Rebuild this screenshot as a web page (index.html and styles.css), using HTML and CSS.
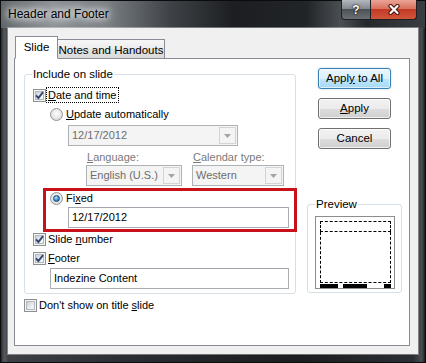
FILE: index.html
```html
<!DOCTYPE html>
<html lang="en">
<head>
    <meta charset="UTF-8">
    <title>Header and Footer</title>
    <link rel="stylesheet" href="styles.css">
</head>
<body>
    <div class="window">
        <div class="titlebar">
            <span class="title">Header and Footer</span>
            <div class="caption-btns">
                <span class="cap-btn help">?</span>
                <span class="cap-btn close">
                    <svg width="14" height="11" viewBox="0 0 14 11">
                        <path d="M3.5 2 L10.5 9 M10.5 2 L3.5 9" stroke="#4a120c" stroke-width="4.2" stroke-linecap="round"/>
                        <path d="M3.5 2 L10.5 9 M10.5 2 L3.5 9" stroke="#fff" stroke-width="2.2" stroke-linecap="round"/>
                    </svg>
                </span>
            </div>
        </div>

        <div class="client">
            <div class="tabs">
                <div class="tab active">Slide</div>
                <div class="tab">Notes and Handouts</div>
            </div>

            <div class="tab-page">
                <div class="left-col">
                    <fieldset class="group include">
                        <legend>Include on slide</legend>

                        <div class="row date-row">
                            <span class="check"><span class="check-inner"><svg class="tick" width="9" height="9" viewBox="0 0 9 9"><path d="M1 4.3 L3.4 7 L8 1.2" fill="none" stroke="#2f4470" stroke-width="1.9"/></svg></span></span>
                            <span class="focus"><u>D</u>ate and time</span>
                        </div>

                        <div class="row radio-row auto-row">
                            <span class="radio"></span>
                            <span><u>U</u>pdate automatically</span>
                        </div>

                        <div class="combo date-combo">
                            <span class="combo-text">12/17/2012</span>
                            <span class="combo-btn"><svg width="7" height="4" viewBox="0 0 7 4"><polygon points="0,0 7,0 3.5,4" fill="#a4a4a4"/></svg></span>
                        </div>

                        <div class="lang-labels">
                            <span class="dim lang-label"><u>L</u>anguage:</span>
                            <span class="dim"><u>C</u>alendar type:</span>
                        </div>

                        <div class="lang-combos">
                            <div class="combo lang-combo">
                                <span class="combo-text">English (U.S.)</span>
                                <span class="combo-btn"><svg width="7" height="4" viewBox="0 0 7 4"><polygon points="0,0 7,0 3.5,4" fill="#a4a4a4"/></svg></span>
                            </div>
                            <div class="combo cal-combo">
                                <span class="combo-text">Western</span>
                                <span class="combo-btn"><svg width="7" height="4" viewBox="0 0 7 4"><polygon points="0,0 7,0 3.5,4" fill="#a4a4a4"/></svg></span>
                            </div>
                        </div>

                        <div class="highlight">
                            <div class="row radio-row">
                                <span class="radio on"></span>
                                <span>Fi<u>x</u>ed</span>
                            </div>
                            <div class="textbox fixed-box">12/17/2012</div>
                        </div>

                        <div class="row">
                            <span class="check"><span class="check-inner"><svg class="tick" width="9" height="9" viewBox="0 0 9 9"><path d="M1 4.3 L3.4 7 L8 1.2" fill="none" stroke="#2f4470" stroke-width="1.9"/></svg></span></span>
                            <span>Slide <u>n</u>umber</span>
                        </div>

                        <div class="row footer-row">
                            <span class="check"><span class="check-inner"><svg class="tick" width="9" height="9" viewBox="0 0 9 9"><path d="M1 4.3 L3.4 7 L8 1.2" fill="none" stroke="#2f4470" stroke-width="1.9"/></svg></span></span>
                            <span><u>F</u>ooter</span>
                        </div>

                        <div class="textbox footer-box">Indezine Content</div>
                    </fieldset>

                    <div class="row title-row">
                        <span class="check"><span class="check-inner"></span></span>
                        <span>Don't show on title <u>s</u>lide</span>
                    </div>
                </div>

                <div class="right-col">
                    <div class="btn default">Appl<u>y</u> to All</div>
                    <div class="btn"><u>A</u>pply</div>
                    <div class="btn">Cancel</div>

                    <fieldset class="group preview">
                        <legend>Preview</legend>
                        <div class="preview-page">
                            <div class="ph-header"></div>
                            <div class="ph-body"></div>
                            <div class="ph-footer">
                                <span class="bar bar-date"></span>
                                <span class="bar bar-text"></span>
                                <span class="bar bar-num"></span>
                            </div>
                        </div>
                    </fieldset>
                </div>
            </div>
        </div>
    </div>
</body>
</html>
```

FILE: styles.css
```css
body {
    margin: 0;
    background: #000;
    font-family: "Liberation Sans", Arial, sans-serif;
    font-size: 11px;
    color: #000;
}

/* window frame */
.window {
    width: 426px;
    height: 363px;
    display: flex;
    flex-direction: column;
    background: linear-gradient(to right, #1a1c1f 0%, #55595e 1%, #3d4145 2%, #2a2d31 30%, #1b1d20 70%, #2c2f33 97%, #4a4e52 99%, #0e0f10 100%);
    box-shadow: inset 0 0 0 1px #0b0b0b;
}

.titlebar {
    height: 28px;
    display: flex;
    align-items: flex-start;
    background: linear-gradient(to right, #5f6469 0%, #8d9297 12%, #7a7f84 25%, #3e4246 40%, #1c1e21 55%, #222528 72%, #4b4f53 80%, #25282b 86%, #3a3e42 100%);
    box-shadow: inset 0 1px 0 #0b0b0b, inset 1px 0 0 #0b0b0b, inset -1px 0 0 #0b0b0b;
}

.title {
    padding-left: 8px;
    line-height: 29px;
    font-size: 12px;
    color: #000;
    text-shadow: 0 0 6px #fff, 0 0 10px #fff, 0 0 14px rgba(255, 255, 255, 0.9);
}

.caption-btns {
    margin-left: auto;
    margin-right: 9px;
    display: flex;
}

.cap-btn {
    height: 20px;
    box-sizing: border-box;
    display: flex;
    align-items: center;
    justify-content: center;
    border: 1px solid #1e2023;
    border-top: none;
}

.help {
    width: 30px;
    border-bottom-left-radius: 4px;
    background: linear-gradient(#b3b8be 0%, #858a90 45%, #4d5258 50%, #6b7075 100%);
    color: #fff;
    font-weight: bold;
    font-size: 12px;
    text-shadow: 0 0 2px #000, 0 0 1px #000;
}

.close {
    width: 47px;
    margin-left: -1px;
    border-bottom-right-radius: 4px;
    background: linear-gradient(#eaa497 0%, #d9725f 45%, #c23a26 50%, #d4553a 100%);
}

/* client area */
.client {
    flex: 1;
    margin: 0 8px 9px 8px;
    padding: 8px 8px 8px 6px;
    background: #f0f0f0;
    display: flex;
    flex-direction: column;
    box-shadow: 0 0 0 1px rgba(255, 255, 255, 0.35);
}

.tabs {
    display: flex;
    align-items: flex-end;
    padding-left: 1px;
    margin-bottom: -1px;
    position: relative;
    z-index: 1;
}

.tab {
    height: 20px;
    width: 108px;
    box-sizing: border-box;
    margin-left: -1px;
    border: 1px solid #898c95;
    background: linear-gradient(#f6f6f6, #ececec 50%, #e2e2e2 51%, #dadada);
    font-size: 11.5px;
    display: flex;
    align-items: center;
    justify-content: center;
    padding-top: 1px;
}

.tab.active {
    height: 23px;
    width: 43px;
    margin-left: 0;
    background: #fff;
    border-bottom-color: #fff;
    position: relative;
    z-index: 1;
    padding-top: 0;
    padding-bottom: 2px;
}

.tab-page {
    flex: 1;
    display: flex;
    align-items: flex-start;
    padding: 8px 0 0 9px;
    border: 1px solid #898c95;
    background: #fff;
}

/* group boxes */
.group {
    margin: 0;
    border: 1px solid #d5dfe5;
    border-radius: 3px;
    min-width: 0;
}

.group legend {
    padding: 0 1px;
    line-height: 15px;
    font-size: 11.5px;
}

.left-col {
    width: 272px;
}

.include {
    padding: 0 0 4px 8px;
}

.include legend {
    margin-left: -1px;
}

.row {
    display: flex;
    align-items: center;
    height: 14px;
    line-height: 14px;
}

.date-row {
    margin-top: 6px;
}

.auto-row {
    margin-top: 5px;
}

.footer-row {
    margin-top: 5px;
}

.title-row {
    margin-top: 4px;
}

.radio-row {
    margin-left: 17px;
}

.check {
    width: 13px;
    height: 13px;
    box-sizing: border-box;
    flex: none;
    padding: 1px;
    margin-right: 2px;
    border: 1px solid #8e8f8f;
    background: #f4f4f4;
}

.check-inner {
    display: block;
    width: 9px;
    height: 9px;
    box-sizing: border-box;
    border: 1px solid #b3b8bf;
    background: linear-gradient(135deg, #cdd2d8, #eef0f2 70%, #f8f8f8);
}

.tick {
    display: block;
    margin: -1px;
    overflow: visible;
}

.focus {
    margin-left: -1px;
    padding: 0 1px;
    outline: 1px dotted #000;
}

.radio {
    width: 13px;
    height: 13px;
    box-sizing: border-box;
    flex: none;
    margin-right: 3px;
    padding: 2px;
    border: 1px solid #939393;
    border-radius: 50%;
    background: radial-gradient(circle at 50% 40%, #fdfdfd, #e4e4e4 60%, #cfcfcf);
}

.radio.on::before {
    content: "";
    display: block;
    width: 7px;
    height: 7px;
    box-sizing: border-box;
    border-radius: 50%;
    border: 1px solid #1c4a7e;
    background: radial-gradient(circle at 40% 35%, #b9e6fc, #3b8fd0 55%, #185796);
}

/* disabled combo boxes */
.combo {
    display: flex;
    height: 21px;
    box-sizing: border-box;
    border: 1px solid #adb2b5;
    background: #f4f4f4;
    color: #6d6d6d;
    line-height: 19px;
    padding-left: 3px;
}

.combo-text {
    flex: 1;
}

.combo-btn {
    width: 17px;
    flex: none;
    margin: 1px 1px 1px 0;
    box-sizing: border-box;
    border: 1px solid #d2d4d6;
    display: flex;
    align-items: center;
    justify-content: center;
}

.date-combo {
    width: 170px;
    margin: 4px 0 0 35px;
}

.lang-labels {
    display: flex;
    margin: 4px 0 0 54px;
    height: 14px;
    line-height: 14px;
}

.dim {
    color: #7a7a7a;
}

.lang-label {
    width: 106px;
}

.lang-combos {
    display: flex;
    margin: 1px 0 0 53px;
}

.lang-combo {
    width: 96px;
    margin-right: 10px;
}

.cal-combo {
    width: 92px;
}

/* red annotation box round the Fixed option */
.highlight {
    height: 44px;
    box-sizing: border-box;
    margin: 2px -2px 0 10px;
    padding: 0 0 1px 4px;
    border: 3px solid #c8121b;
}

.highlight .radio-row {
    margin-left: 0;
}

.textbox {
    height: 21px;
    box-sizing: border-box;
    border: 1px solid #abadb3;
    border-top-color: #a4a6ad;
    background: #fff;
    line-height: 19px;
    padding-left: 3px;
}

.fixed-box {
    width: 221px;
    margin: 2px 0 0 18px;
}

.footer-box {
    width: 239px;
    margin: 3px 0 0 17px;
}

/* buttons and preview */
.right-col {
    width: 95px;
    margin-left: 11px;
    padding-top: 1px;
    display: flex;
    flex-direction: column;
    align-items: center;
}

.btn {
    width: 73px;
    height: 21px;
    box-sizing: border-box;
    border: 1px solid #707070;
    border-radius: 3px;
    background: linear-gradient(#f2f2f2, #ebebeb 50%, #dddddd 51%, #cfcfcf);
    box-shadow: inset 0 0 0 1px rgba(255, 255, 255, 0.7);
    text-align: center;
    line-height: 19px;
    font-size: 11.5px;
}

.btn + .btn {
    margin-top: 9px;
}

.btn.default {
    border-color: #3c7fb1;
    background: linear-gradient(#eaf6fd, #d9f0fc 50%, #bee6fd 51%, #a7d9f5);
    box-shadow: inset 0 0 0 1px rgba(255, 255, 255, 0.6), 0 0 2px rgba(90, 170, 220, 0.6);
}

.preview {
    align-self: stretch;
    box-sizing: border-box;
    margin-top: 48px;
    padding: 0 0 3px 7px;
}

.preview-page {
    width: 80px;
    height: 73px;
    box-sizing: border-box;
    margin-top: 4px;
    padding: 4px 3px 0 4px;
    border: 1px solid #8d8d8d;
    background: #fff;
    display: flex;
    flex-direction: column;
}

.ph-header {
    height: 11px;
    box-sizing: border-box;
    border: 1px dashed #000;
}

.ph-body {
    flex: 1;
    border: 1px dashed #000;
    border-top: none;
}

.ph-footer {
    display: flex;
    height: 4px;
    margin: 1px 0 0 0;
}

.bar {
    background: #000;
}

.bar-date {
    width: 18px;
    margin-right: 5px;
}

.bar-text {
    width: 24px;
}

.bar-num {
    width: 7px;
    margin-left: auto;
}
```
